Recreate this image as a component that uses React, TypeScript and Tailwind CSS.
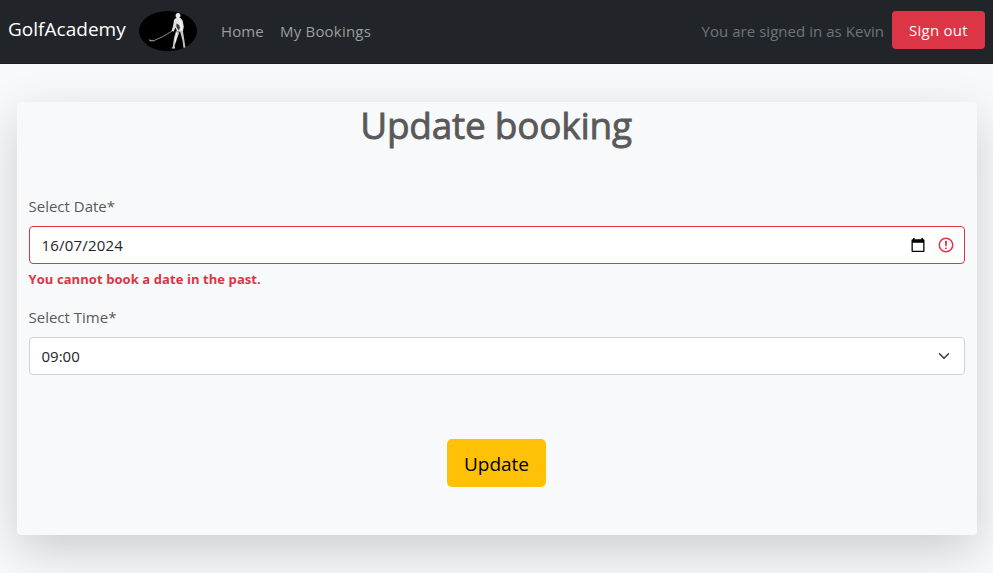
import React from "react";

function GolferLogo() {
  return (
    <svg width="58" height="40" viewBox="0 0 58 40" className="block shrink-0" aria-hidden="true">
      <ellipse cx="29" cy="20" rx="29" ry="20" fill="#000" />
      <path d="M34 19.5 L24 25.5 L14.5 29.8" stroke="#999" strokeWidth="0.9" fill="none" />
      <path d="M14.8 29.8 L11.2 29.6 L10.6 28.4" stroke="#b4b4b4" strokeWidth="1.1" fill="none" />
      <ellipse cx="39" cy="4.6" rx="2.4" ry="2.6" fill="#e8e8e8" />
      <path d="M37 7 L41.5 7 L43.6 9.5 L44.8 15.5 L43.8 21 L38 20.5 L36.6 16.5 L34.6 20.5 L32.6 19.8 L34.2 14.5 L35 8.8 Z" fill="#e0e0e0" />
      <path d="M37.4 12.5 L40.2 14 L41 17 L39.6 19.4 L37.4 16 Z" fill="#3a3a3a" />
      <path d="M37 20 L40.2 21.5 L37.6 29 L35.6 35 L36.2 37.6 L32.6 37.6 L33.8 35.5 L35 27 Z" fill="#c9c9c9" />
      <path d="M37.6 22 L36.2 31" stroke="#fff" strokeWidth="0.9" fill="none" />
      <path d="M41 20.5 L44 20.5 L45.2 28 L46.4 36.5 L44.4 36.8 L43.6 30 Z" fill="#c4c4c4" />
      <path d="M40 8 L42 14 L42.5 19" stroke="#fff" strokeWidth="1" fill="none" />
    </svg>
  );
}

function Navbar() {
  return (
    <nav className="flex h-16 items-center border-b border-[#1a1d20] bg-[#212529] px-2 pb-px">
      <span className="mr-[13px] w-[118px] whitespace-nowrap pb-[5px] text-[19px] leading-[30px] tracking-[0.02px] text-white">
        GolfAcademy
      </span>
      <GolferLogo />
      <a className="ml-6 w-[43px] whitespace-nowrap text-[15px] leading-6 tracking-[0.1px] text-[#9b9d9e]">Home</a>
      <a className="ml-4 whitespace-nowrap text-[15px] leading-6 tracking-[0.2px] text-[#9b9d9e]">My Bookings</a>
      <span className="ml-auto mr-2 whitespace-nowrap text-[15px] leading-6 tracking-[0.04px] text-[#6c757d]">
        You are signed in as Kevin
      </span>
      <button className="mb-[2px] h-[38px] w-[93px] whitespace-nowrap rounded bg-[#dc3545] text-[15px] leading-6 tracking-[0.25px] text-white">
        Sign out
      </button>
    </nav>
  );
}

function CalendarIcon() {
  return (
    <svg width="14" height="15" viewBox="0 0 14 15" className="block" aria-hidden="true">
      <path
        fill="#000"
        fillRule="evenodd"
        d="M2 0h1.6v1.2h6.8V0H12v1.2h.6A1.1 1.1 0 0 1 13.5 2.3v10.8a1 1 0 0 1-1 1h-11a1 1 0 0 1-1-1V2.3A1.1 1.1 0 0 1 1.5 1.2H2zM1.8 4.8v8h10.4v-8z"
      />
    </svg>
  );
}

function InvalidIcon() {
  return (
    <svg width="18" height="18" viewBox="0 0 12 12" fill="none" stroke="#dc3545" className="block" aria-hidden="true">
      <circle cx="6" cy="6" r="4.5" />
      <path strokeLinejoin="round" d="M5.8 3.6h.4L6 6.5z" />
      <circle cx="6" cy="8.2" r=".6" fill="#dc3545" stroke="none" />
    </svg>
  );
}

function ChevronIcon() {
  return (
    <svg width="12" height="16" viewBox="0 0 16 16" className="block" aria-hidden="true">
      <path fill="none" stroke="#343a40" strokeLinecap="round" strokeLinejoin="round" strokeWidth="2" d="m2 5 6 6 6-6" />
    </svg>
  );
}

export default function App() {
  return (
    <div className="h-[573px] overflow-hidden bg-[#f8f9fb] font-['Open_Sans','Noto_Sans',sans-serif]">
      <Navbar />
      <main className="mx-auto mt-[38px] h-[433px] w-[960px] rounded bg-[#f8f9fb] px-3 text-[#595959] shadow-[0_16px_48px_rgba(0,0,0,0.175)]">
        <h1 className="pr-px text-center text-[37px] font-medium leading-[45px] tracking-[-0.25px] [-webkit-text-stroke:0.8px_#595959]">
          Update booking
        </h1>
        <form className="mt-[47px]">
          <label className="block text-[15px] leading-6">Select Date*</label>
          <div className="mt-2 flex h-[38px] items-center rounded border border-[#dc3545] bg-white pl-3 pr-[9px] text-[15px] text-[#212529]">
            <span className="tracking-[0.2px]">16/07/2024</span>
            <span className="ml-auto mr-3">
              <CalendarIcon />
            </span>
            <InvalidIcon />
          </div>
          <p className="mt-[5px] text-[13px] font-bold leading-5 tracking-[0.08px] text-[#dc3545]">
            You cannot book a date in the past.
          </p>
          <label className="mt-4 block text-[15px] leading-6">Select Time*</label>
          <div className="mt-2 flex h-[38px] items-center justify-between rounded border border-[#ced4da] bg-white pl-3 pr-[14px] text-[15px] text-[#212529]">
            <span>09:00</span>
            <ChevronIcon />
          </div>
          <div className="mt-16 flex justify-center">
            <button type="button" className="h-12 w-[99px] rounded-[5px] bg-[#ffc107] pt-[2px] text-[19px] leading-[30px] text-black">
              Update
            </button>
          </div>
        </form>
      </main>
    </div>
  );
}
